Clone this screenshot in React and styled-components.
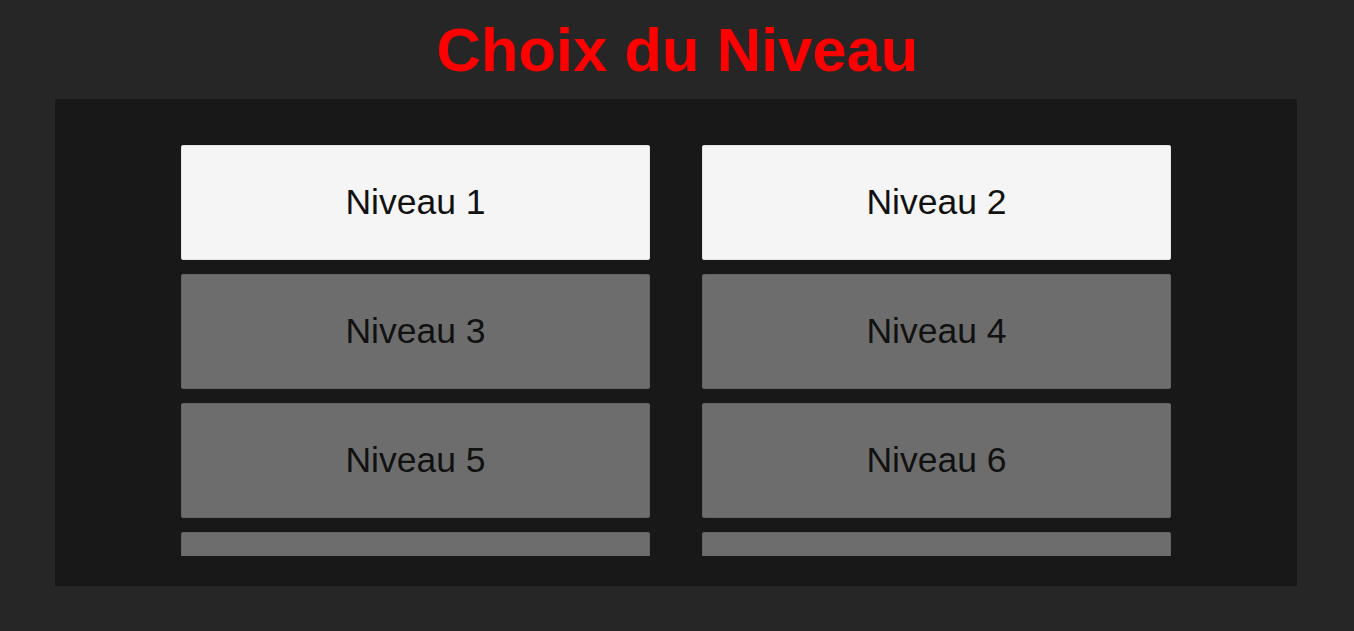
import React from 'react';
import styled, { createGlobalStyle } from 'styled-components';

const GlobalStyle = createGlobalStyle`
  html, body {
    margin: 0;
    padding: 0;
    background: #262626;
  }
  * {
    box-sizing: border-box;
  }
`;

const Page = styled.div`
  height: 631px;
  display: flex;
  flex-direction: column;
  font-family: 'Liberation Sans', Arial, sans-serif;
  background: #262626;
  overflow: hidden;
`;

const Title = styled.h1`
  margin: 0;
  height: 99px;
  display: flex;
  align-items: center;
  justify-content: center;
  padding: 0 0 1px 1px;
  color: #ff0000;
  font-size: 61.5px;
  font-weight: 700;
`;

const Panel = styled.div`
  width: 1242px;
  height: 487px;
  margin-left: 55px;
  background: #181818;
  padding: 46px 0 30px;
`;

const LevelGrid = styled.div`
  height: 411px;
  overflow: hidden;
  display: grid;
  grid-template-columns: repeat(2, 469px);
  grid-auto-rows: 115px;
  column-gap: 52px;
  row-gap: 14px;
  justify-content: center;
  align-content: start;
`;

const LevelButton = styled.button`
  border: none;
  border-radius: 3px;
  background: ${({ $unlocked }) => ($unlocked ? '#f5f5f5' : '#6d6d6d')};
  box-shadow: inset 0 0 0 1px ${({ $unlocked }) => ($unlocked ? '#e4e4e4' : '#646464')};
  color: #111;
  font-family: inherit;
  font-size: 35.5px;
  padding: 0 0 0 0;
  cursor: pointer;
`;

const levels = [1, 2, 3, 4, 5, 6, 7, 8];

const App = () => {
  return (
    <>
      <GlobalStyle />
      <Page>
        <Title>Choix du Niveau</Title>
        <Panel>
          <LevelGrid>
            {levels.map((n) => (
              <LevelButton key={n} $unlocked={n <= 2}>
                Niveau {n}
              </LevelButton>
            ))}
          </LevelGrid>
        </Panel>
      </Page>
    </>
  );
};

export default App;
